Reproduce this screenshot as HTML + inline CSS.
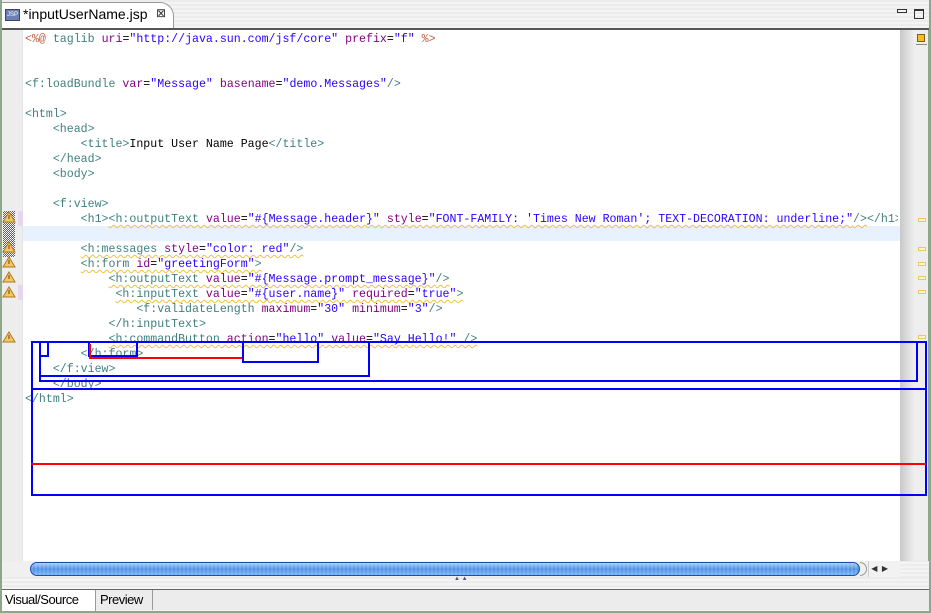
<!DOCTYPE html>
<html><head><meta charset="utf-8"><style>
*{margin:0;padding:0;box-sizing:border-box}
body{width:931px;height:613px;overflow:hidden;background:#8fa789;position:relative;font-family:"Liberation Sans",sans-serif}
.abs{position:absolute}
#win{left:2px;top:0;width:927px;height:611px;background:repeating-linear-gradient(#ececec 0 2px,#f4f4f4 2px 4px)}
#code{left:22px;top:30px;width:878px;height:531px;background:#fff;border-left:1px solid #e4e4e4}
#gut{left:2px;top:30px;width:20px;height:531px;background:#ededed}
#clip{position:absolute;left:0;top:0;width:898px;height:560px;overflow:hidden}
pre{position:absolute;left:25px;top:32px;font-family:"Liberation Mono",monospace;font-size:11.6px;line-height:15px;color:#000;white-space:pre}
.t{color:#3f7f7f}.a{color:#7f007f}.v{color:#2a00ff}.d{color:#bf5f3f}
.w{text-decoration:underline wavy #f0c040;text-decoration-thickness:1px;text-underline-offset:2px}
.b{position:absolute;border:2px solid #0000ff}
.r{position:absolute;border:2px solid #ff0000}
.mk{position:absolute;left:918px;width:8px;height:4px;border:1px solid #e8c860;background:#fff6d0}
</style></head><body>
<div id="win" class="abs"></div>
<div class="abs" style="left:2px;top:2px;width:172px;height:27px;background:#fff;border-top:1px solid #999;border-right:1px solid #999;border-radius:0 14px 0 0"></div>
<div class="abs" style="left:2px;top:28px;width:927px;height:2px;background:#555"></div>
<div class="abs" style="left:5px;top:9px;width:15px;height:12px;background:#6c7fb8;border:1px solid #445;color:#fff;font-size:6px;line-height:10px;text-align:center">JSP</div>
<div class="abs" style="left:23px;top:6px;font-size:14px;color:#000">*inputUserName.jsp</div>
<div class="abs" style="left:156px;top:6px;font-size:12px;color:#333">⊠</div>
<div class="abs" style="left:897px;top:9px;width:10px;height:4px;border:1px solid #333"></div>
<div class="abs" style="left:914px;top:9px;width:10px;height:10px;border:1px solid #333;border-top-width:2px"></div>
<div class="abs" style="left:2px;top:30px;width:927px;height:531px;background:#8fa789"></div>
<div id="gut" class="abs"></div>
<div id="code" class="abs"></div>
<div class="abs" style="left:900px;top:30px;width:15px;height:531px;background:linear-gradient(90deg,#c8c8c8,#f0f0f0)"></div>
<div class="abs" style="left:915px;top:30px;width:13px;height:531px;background:#eeeeee"></div>
<div class="abs" style="left:917px;top:34px;width:8px;height:8px;background:#f0c020;border:1px solid #806010"></div>
<div class="abs" style="left:916px;top:44px;width:11px;height:1px;background:#888"></div>
<div class="mk" style="top:218px"></div><div class="mk" style="top:247px"></div><div class="mk" style="top:262px"></div><div class="mk" style="top:276px"></div><div class="mk" style="top:290px"></div><div class="mk" style="top:335px"></div>
<div class="abs" style="left:23px;top:226px;width:877px;height:15px;background:#e8f2fe"></div>
<div class="abs" style="left:18px;top:211px;width:5px;height:15px;background:#e6d6ee"></div>
<div class="abs" style="left:18px;top:285px;width:5px;height:15px;background:#e6d6ee"></div>
<div class="abs" style="left:3px;top:211px;width:12px;height:46px;background:repeating-conic-gradient(#2a8a2a 0 25%,#fff 0 50%) 0 0/2px 2px"></div>
<svg class="abs" style="left:0;top:0" width="30" height="560">
<g fill="#f4c860" stroke="#b07820" stroke-width="1">
<path d="M9 212 L15 222 L3 222 Z"/><path d="M9 242 L15 252 L3 252 Z"/><path d="M9 257 L15 267 L3 267 Z"/><path d="M9 272 L15 282 L3 282 Z"/><path d="M9 287 L15 297 L3 297 Z"/><path d="M9 332 L15 342 L3 342 Z"/>
</g>
<g fill="#6a4010"><rect x="8.5" y="215" width="1" height="4"/><rect x="8.5" y="245" width="1" height="4"/><rect x="8.5" y="260" width="1" height="4"/><rect x="8.5" y="275" width="1" height="4"/><rect x="8.5" y="290" width="1" height="4"/><rect x="8.5" y="335" width="1" height="4"/></g>
</svg>
<div id="clip"><pre><span class="d">&lt;%@</span> <span class="t">taglib</span> <span class="a">uri</span>=<span class="v">"http://java.sun.com/jsf/core"</span> <span class="a">prefix</span>=<span class="v">"f"</span> <span class="d">%&gt;</span>


<span class="t">&lt;f:loadBundle</span> <span class="a">var</span>=<span class="v">"Message"</span> <span class="a">basename</span>=<span class="v">"demo.Messages"</span><span class="t">/&gt;</span>

<span class="t">&lt;html&gt;</span>
    <span class="t">&lt;head&gt;</span>
        <span class="t">&lt;title&gt;</span>Input User Name Page<span class="t">&lt;/title&gt;</span>
    <span class="t">&lt;/head&gt;</span>
    <span class="t">&lt;body&gt;</span>

    <span class="t">&lt;f:view&gt;</span>
        <span class="t">&lt;h1&gt;</span><span class="w"><span class="t">&lt;h:outputText</span> <span class="a">value</span>=<span class="v">"#{Message.header}"</span> <span class="a">style</span>=<span class="v">"FONT-FAMILY: 'Times New Roman'; TEXT-DECORATION: underline;"</span><span class="t">/&gt;</span></span><span class="t">&lt;/h1&gt;</span>

        <span class="w"><span class="t">&lt;h:messages</span> <span class="a">style</span>=<span class="v">"color: red"</span><span class="t">/&gt;</span></span>
        <span class="w"><span class="t">&lt;h:form</span> <span class="a">id</span>=<span class="v">"greetingForm"</span><span class="t">&gt;</span></span>
            <span class="w"><span class="t">&lt;h:outputText</span> <span class="a">value</span>=<span class="v">"#{Message.prompt_message}"</span><span class="t">/&gt;</span></span>
             <span class="w"><span class="t">&lt;h:inputText</span> <span class="a">value</span>=<span class="v">"#{user.name}"</span> <span class="a">required</span>=<span class="v">"true"</span><span class="t">&gt;</span></span>
                <span class="t">&lt;f:validateLength</span> <span class="a">maximum</span>=<span class="v">"30"</span> <span class="a">minimum</span>=<span class="v">"3"</span><span class="t">/&gt;</span>
            <span class="t">&lt;/h:inputText&gt;</span>
            <span class="w"><span class="t">&lt;h:commandButton</span> <span class="a">action</span>=<span class="v">"hello"</span> <span class="a">value</span>=<span class="v">"Say Hello!"</span> <span class="t">/&gt;</span></span>
        <span class="t">&lt;/h:form&gt;</span>
    <span class="t">&lt;/f:view&gt;</span>
    <span class="t">&lt;/body&gt;</span>
<span class="t">&lt;/html&gt;</span></pre></div>
<div class="b" style="left:31px;top:341px;width:896px;height:155px"></div>
<div class="abs" style="left:31px;top:388px;width:896px;height:2px;background:#00f"></div>
<div class="abs" style="left:31px;top:463px;width:895px;height:2px;background:#f00"></div>
<div class="b" style="left:39px;top:341px;width:879px;height:41px"></div>
<div class="b" style="left:39px;top:341px;width:331px;height:36px"></div>
<div class="b" style="left:39px;top:341px;width:10px;height:16px"></div>
<div class="b" style="left:88px;top:341px;width:50px;height:16px"></div>
<div class="r" style="left:89px;top:344px;width:155px;height:15px;border-top:none"></div>
<div class="b" style="left:242px;top:341px;width:77px;height:22px"></div>
<div class="abs" style="left:2px;top:561px;width:898px;height:16px;background:#f0f0f0"></div>
<div class="abs" style="left:30px;top:562px;width:830px;height:14px;border-radius:7px;border:1px solid #1a4fa8;background:repeating-linear-gradient(90deg,rgba(255,255,255,.15) 0 2px,transparent 2px 4px),linear-gradient(#a8cff8,#4c90e6 50%,#74b4f6)"></div>
<div class="abs" style="left:860px;top:562px;width:7px;height:14px;border-radius:0 7px 7px 0;border:1px solid #999;border-left:none"></div>
<div class="abs" style="left:868px;top:561px;width:32px;height:16px;background:#f2f2f2;border-left:1px solid #ccc;font-size:8px;line-height:16px;color:#333">&nbsp;◀&nbsp;&nbsp;▶</div>
<div class="abs" style="left:2px;top:577px;width:927px;height:13px;background:repeating-linear-gradient(#ececec 0 2px,#f4f4f4 2px 4px)"></div>
<div class="abs" style="left:454px;top:576px;font-size:6px;color:#557">▲ ▲</div>
<div class="abs" style="left:2px;top:589px;width:927px;height:1px;background:#666"></div>
<div class="abs" style="left:2px;top:590px;width:927px;height:20px;background:#ececec"></div>
<div class="abs" style="left:2px;top:590px;height:21px;background:#fff;border-right:1px solid #999;font-size:13px;line-height:20px;padding-left:3px;letter-spacing:-0.5px;width:94px">Visual/Source</div>
<div class="abs" style="left:97px;top:590px;width:56px;height:20px;border-right:1px solid #999;font-size:13px;line-height:20px;padding-left:3px;letter-spacing:-0.5px">Preview</div>
</body></html>
